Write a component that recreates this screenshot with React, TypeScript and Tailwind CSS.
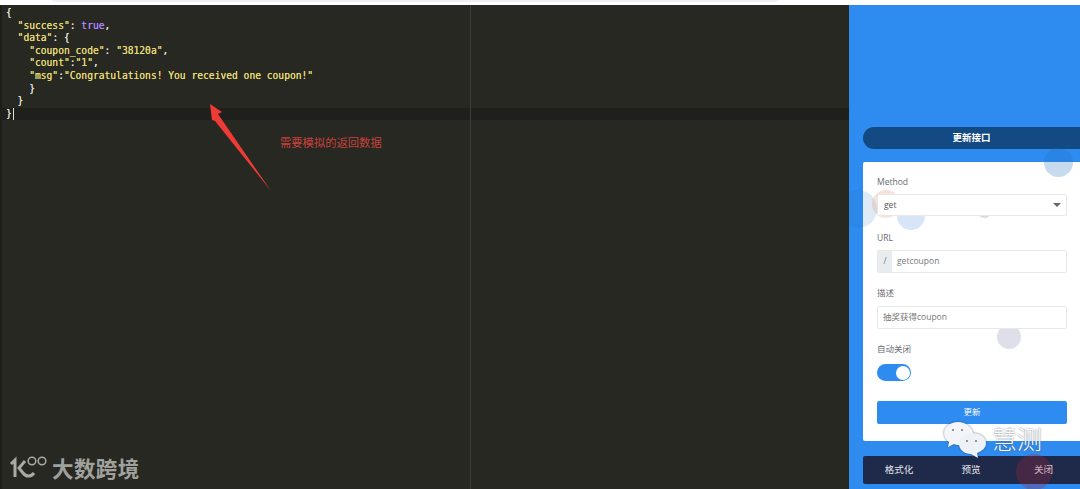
import React from "react";

const SANS = "font-['Open_Sans','Noto_Sans_CJK_SC',sans-serif]";

const Str = ({ children }: { children: React.ReactNode }) => (
  <span className="text-[#e6db74]">{children}</span>
);

const Line = ({ indent = 0, active = false, children }: { indent?: number; active?: boolean; children: React.ReactNode }) => (
  <div className={`h-[12.6px] whitespace-pre pl-[4px] ${active ? "-ml-[2px] bg-[#1f201b] pl-[6px]" : ""}`}>
    {" ".repeat(indent)}
    {children}
  </div>
);

const Label = ({ children }: { children: React.ReactNode }) => (
  <div className="text-[8.5px] leading-[12px] text-[#666a70]">{children}</div>
);

// bubbles floating over the side panel
const Bubble = ({ className }: { className: string }) => (
  <div className={`absolute rounded-full ${className}`} />
);

const WatermarkLogo = () => (
  <svg width="40" height="26" viewBox="0 0 40 26" fill="none" className="shrink-0">
    <path d="M2 9 L6 5 V22" stroke="#a9aaa6" strokeWidth="3" />
    <path d="M16 6 L10 13 L14 18 C17 22 22 22 25 18" stroke="#a9aaa6" strokeWidth="3" />
    <circle cx="23" cy="6" r="3.8" stroke="#a9aaa6" strokeWidth="1.5" />
    <circle cx="33" cy="6" r="3.8" stroke="#a9aaa6" strokeWidth="1.5" />
  </svg>
);

const WeChatLogo = () => (
  <svg width="46" height="38" viewBox="0 0 46 38" className="drop-shadow-[0_0_1px_rgba(60,70,90,0.7)]">
    <path d="M15 1 C7 1 1 6 1 12 C1 16 3 19 6 21 L5 26 L11 23 C13 24 15 24 18 24 L30 12 C29 6 23 1 15 1 Z" fill="#f3f5f8" />
    <circle cx="10" cy="9" r="1" fill="#6d7684" />
    <circle cx="19" cy="9" r="1" fill="#6d7684" />
    <path d="M29 12 C21 12 16 17 16 23 C16 29 22 33 28 33 L35 37 L34 32 C39 30 43 27 43 22 C43 16 37 12 29 12 Z" fill="#eef2f7" />
    <circle cx="24" cy="20" r="1" fill="#6d7684" />
    <circle cx="33" cy="20" r="1" fill="#6d7684" />
  </svg>
);

export default function App() {
  return (
    <div className="flex h-[489px] w-[1080px] flex-col overflow-hidden bg-white">
      <div className="h-[5px] shrink-0 bg-white pl-[52px] pr-[302px]">
        <div className="h-[2px] rounded-b-[2px] bg-[#f0f0f8]" />
      </div>
      <div className="flex min-h-0 flex-1">
        {/* editor */}
        <div className="relative flex w-[849px] shrink-0 border-l-2 border-[#1d1e1a] bg-[#272822]">
          <div className="flex-1 pt-[2px] font-['DejaVu_Sans_Mono',monospace] text-[9.63px] leading-[12.6px] text-[#e0e0d8] [text-shadow:0_0_0.6px_currentColor]">
            <Line>{"{"}</Line>
            <Line indent={2}>
              <Str>"success"</Str>: <span className="text-[#ae81ff]">true</span>,
            </Line>
            <Line indent={2}>
              <Str>"data"</Str>: {"{"}
            </Line>
            <Line indent={4}>
              <Str>"coupon_code"</Str>: <Str>"38120a"</Str>,
            </Line>
            <Line indent={4}>
              <Str>"count"</Str>:<Str>"1"</Str>,
            </Line>
            <Line indent={4}>
              <Str>"msg"</Str>:<Str>"Congratulations! You received one coupon!"</Str>
            </Line>
            <Line indent={4}>{"}"}</Line>
            <Line indent={2}>{"}"}</Line>
            <Line active>
              {"}"}
              <span className="ml-[1px] inline-block h-[12px] w-[1px] bg-[#e0e0d8] align-top" />
            </Line>
          </div>

          {/* print margin */}
          <div className="absolute bottom-0 left-[468px] top-0 w-px bg-[#3d3e39]" />

          {/* annotation */}
          <svg width="80" height="100" viewBox="0 0 80 100" className="absolute left-[206px] top-[97px]">
            <path d="M2 2 L14 10 L10 12 L63 89 L7 19 L4 18 Z" fill="#ee3b36" />
          </svg>
          <div className="absolute left-[278px] top-[129px] font-['Noto_Sans_CJK_SC',sans-serif] text-[11.3px] leading-[16px] text-[#c8413c]">
            需要模拟的返回数据
          </div>

          {/* watermark */}
          <div className="absolute left-[7px] top-[450px] flex items-center gap-[3px]">
            <WatermarkLogo />
            <span className="font-['Noto_Sans_CJK_SC',sans-serif] text-[21.5px] font-bold leading-[26px] tracking-[0.4px] text-[#a0a19d]">
              大数跨境
            </span>
          </div>
        </div>

        {/* side panel */}
        <div className={`relative flex flex-1 flex-col overflow-hidden bg-[#2e8bef] pl-[14px] pt-[122px] ${SANS}`}>
          <div className="flex h-[22px] items-center justify-center rounded-l-full bg-[#144a83] text-[9.5px] font-bold text-white">
            更新接口
          </div>

          <div className="mt-[13px] h-[279px] rounded-l-[2px] bg-white pl-[14px] pr-[13px] pt-[14px]">
            <Label>Method</Label>
            <div className="relative z-10 mt-[6px] flex h-[22px] items-center justify-between rounded-[2px] border border-[#e6e8ec] bg-white pl-[6px] pr-[5px] text-[8.5px] text-[#555]">
              get
              <span className="h-0 w-0 border-x-[4px] border-t-[4px] border-x-transparent border-t-[#666]" />
            </div>
            <div className="relative z-10 mt-[16px]">
              <Label>URL</Label>
            </div>
            <div className="relative z-10 mt-[6px] flex h-[23px] items-center rounded-[2px] border border-[#e6e8ec] bg-white text-[8.5px] text-[#777]">
              <div className="flex h-full w-[14px] items-center justify-center bg-[#e9ecef]">/</div>
              <span className="pl-[5px]">getcoupon</span>
            </div>
            <div className="mt-[14px]">
              <Label>描述</Label>
            </div>
            <div className="relative z-10 mt-[7px] flex h-[23px] items-center rounded-[2px] border border-[#e6e8ec] bg-white pl-[5px] text-[8.5px] text-[#777]">
              抽奖获得coupon
            </div>
            <div className="mt-[14px]">
              <Label>自动关闭</Label>
            </div>
            <div className="mt-[9px] flex h-[17px] w-[34px] items-center justify-end rounded-full bg-[#2e8bef] pr-[1px]">
              <div className="h-[14px] w-[14px] rounded-full bg-white" />
            </div>
            <div className="mt-[20px] flex h-[23px] items-center justify-center rounded-[2px] bg-[#2e8bef] text-[8.5px] text-white">
              更新
            </div>
          </div>

          <div className="mt-[15px] grid h-[28px] grid-cols-3 items-center rounded-l-[2px] bg-[#1f2a4a] pr-[1px] text-center text-[9.5px] text-[#e6e8ee]">
            <span>格式化</span>
            <span>预览</span>
            <span className="ml-[1px]">关闭</span>
          </div>

          {/* bubbles */}
          <Bubble className="left-[195px] top-[143px] h-[29px] w-[29px] bg-[#1f6fc0]/25" />
          <Bubble className="left-[-10px] top-[185px] h-[38px] w-[38px] bg-[#1f6fc0]/15" />
          <Bubble className="left-[23px] top-[185px] h-[28px] w-[28px] bg-[#e8a080]/30" />
          <Bubble className="left-[48px] top-[197px] h-[28px] w-[28px] bg-[#3b78d8]/20" />
          <Bubble className="left-[128px] top-[198px] h-[15px] w-[15px] bg-[#a08070]/30" />
          <Bubble className="left-[148px] top-[320px] h-[24px] w-[24px] bg-[#5a5f8c]/20" />
          <Bubble className="left-[167px] top-[449px] h-[36px] w-[36px] bg-[#a02040]/30" />

          {/* watermark */}
          <div className="absolute left-[94px] top-[416px] flex items-center gap-[3px]">
            <WeChatLogo />
            <span className="-mt-[4px] font-['Noto_Sans_CJK_SC',sans-serif] text-[25px] font-light leading-[30px] text-white [text-shadow:0_0_1.5px_#4a5568]">
              慧测
            </span>
          </div>
        </div>
      </div>
    </div>
  );
}
